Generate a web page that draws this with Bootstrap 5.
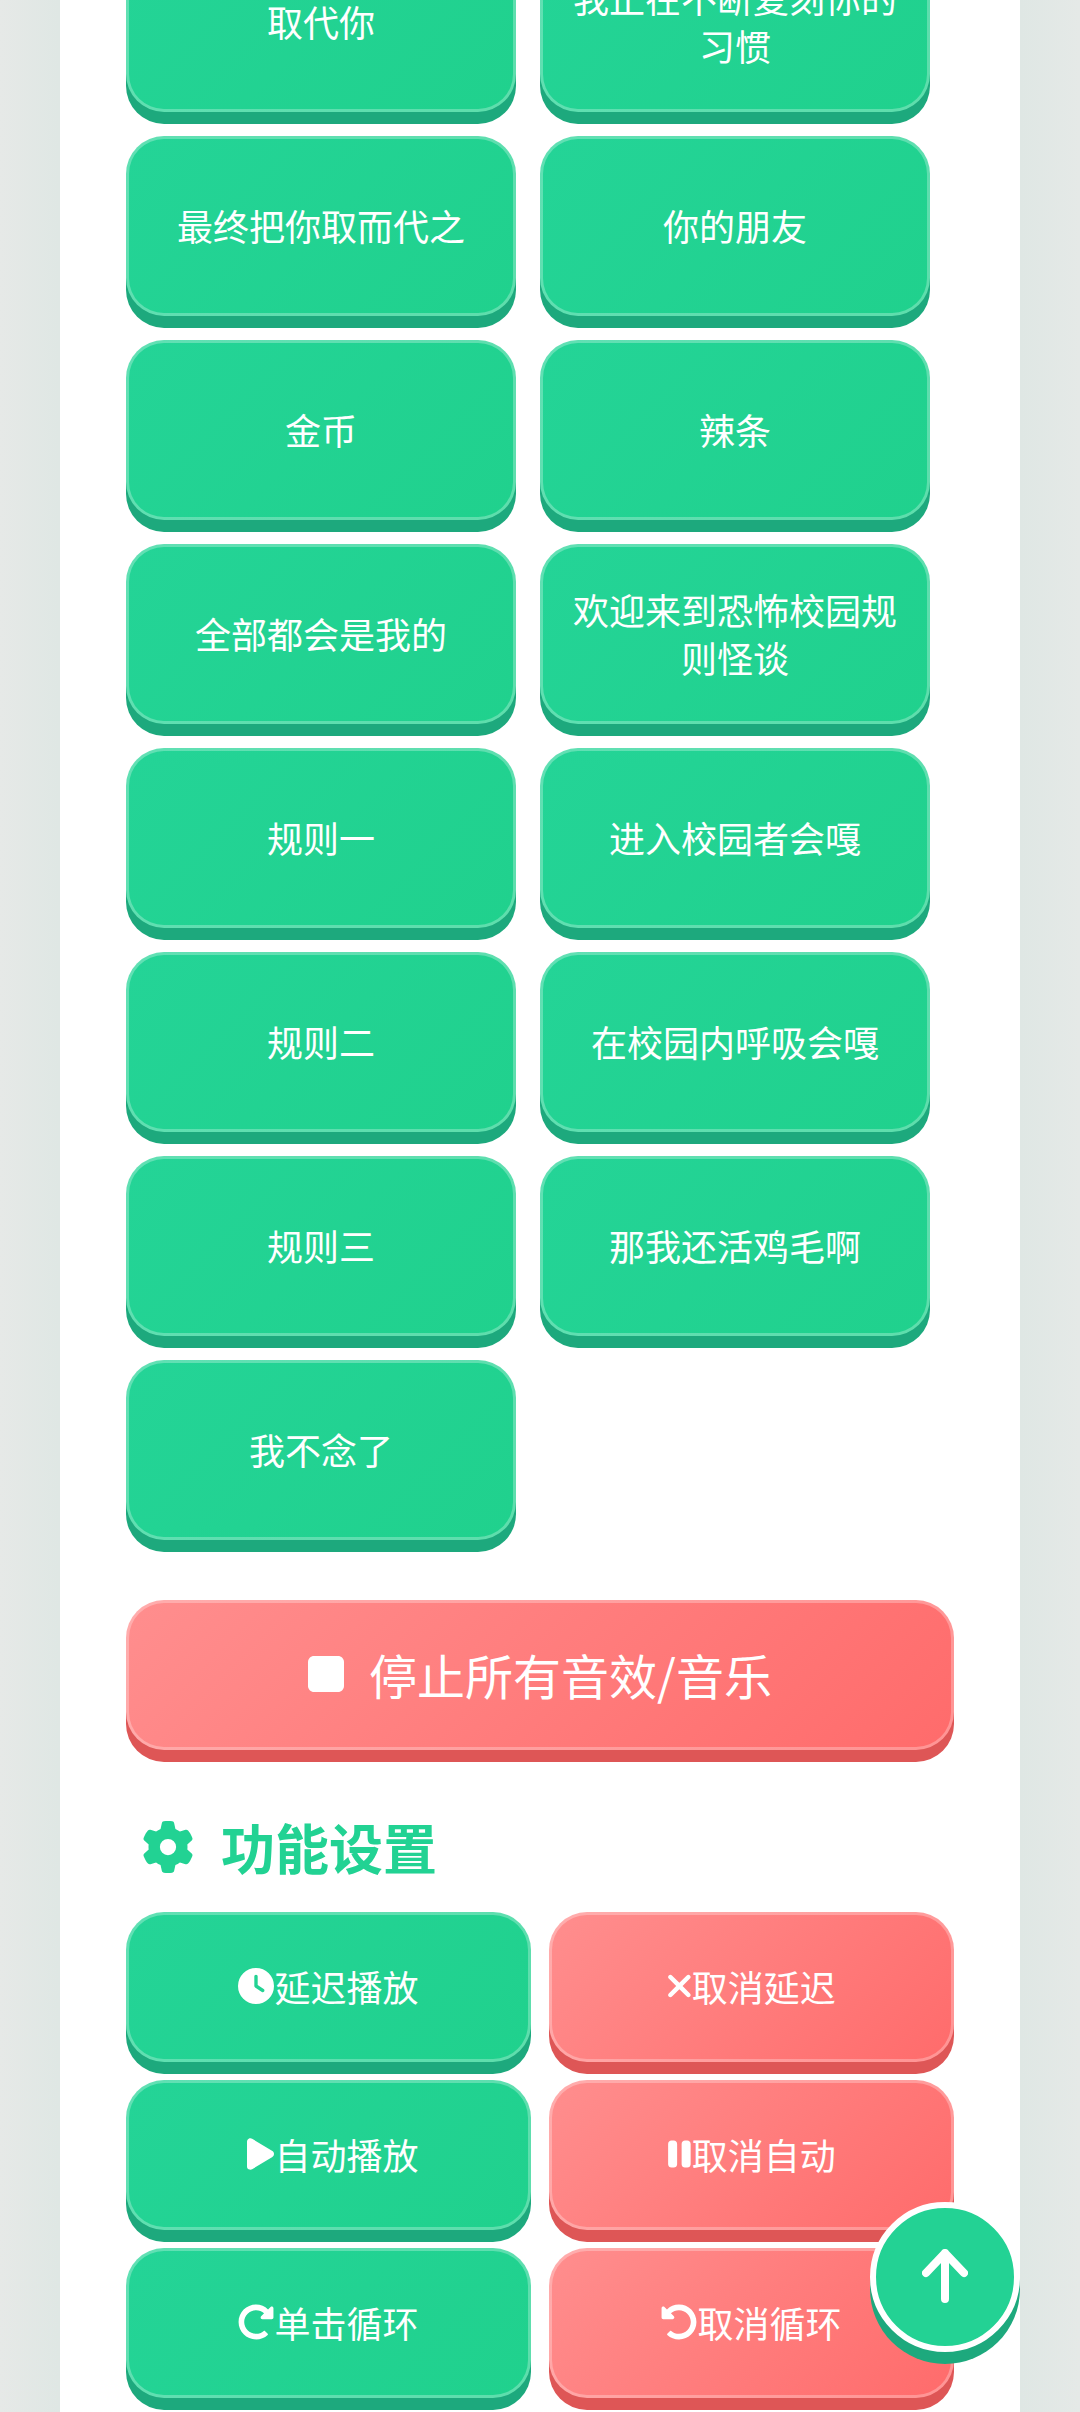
<!DOCTYPE html>
<html lang="zh-CN">
<head>
    <meta charset="UTF-8">
    <meta name="viewport" content="width=device-width, initial-scale=1.0">
    <title>音效按钮</title>
    <link href="https://cdn.jsdelivr.net/npm/bootstrap@5.3.3/dist/css/bootstrap.min.css" rel="stylesheet">
    <style>
        html, body {
            height: 2412px;
            overflow: hidden;
        }
        body {
            background-color: #e0e8e5;
            background-image: linear-gradient(90deg, #e6e9e7, #dfe7e4 5.5%, #dfe7e4 94.5%, #e5e9e7);
            font-family: "Noto Sans CJK SC", "Noto Sans", sans-serif;
        }
        .page-box {
            width: 960px;
            height: 2412px;
            margin: 0 auto;
            padding: 0 66px;
            background-color: #fff;
            overflow: hidden;
        }
        .sound-grid {
            grid-template-columns: 390px 390px;
            gap: 24px;
            margin-top: -68px;
        }
        .tool-grid {
            grid-template-columns: 405px 405px;
            gap: 18px;
        }
        .jelly-btn {
            display: flex;
            align-items: center;
            justify-content: center;
            height: 180px;
            padding: 0 30px 2px;
            color: #fff;
            font-size: 36px;
            line-height: 48px;
            border: 3px solid rgba(255, 255, 255, .28);
            border-radius: 38px;
            background-origin: border-box;
        }
        .jelly-btn:hover, .jelly-btn:active {
            color: #fff;
        }
        .jelly-green {
            background-color: #22d293;
            background-image: linear-gradient(135deg, #24d497, #20d18d);
            box-shadow: 0 12px 0 #1da97d;
        }
        .jelly-red {
            background-color: #ff7c7c;
            background-image: linear-gradient(135deg, #ff8e8e, #ff6b6b);
            box-shadow: 0 12px 0 #de5656;
        }
        .stop-btn {
            height: 150px;
            margin-top: 60px;
            font-size: 48px;
            gap: 25px;
        }
        .tool-btn {
            height: 150px;
        }
        .tool-btn svg {
            width: auto;
            height: 36px;
            fill: #fff;
        }
        .stop-btn svg {
            width: auto;
            height: 48px;
            fill: #fff;
        }
        .tools-title {
            margin: 67px 0 35px 16px;
            color: #22d293;
            font-size: 54px;
            font-weight: 700;
            line-height: 60px;
            gap: 27px;
        }
        .tools-title svg {
            width: 52px;
            height: 52px;
            fill: #22d293;
        }
        .top-btn {
            position: fixed;
            right: 60px;
            bottom: 60px;
            width: 150px;
            height: 150px;
            padding: 0 0 3px;
            border: 6px solid #fff;
            border-radius: 50%;
            background-color: #23d294;
            box-shadow: 0 12px 0 #1da97d;
        }
        .top-btn svg {
            width: 46px;
            height: 54px;
        }
    </style>
</head>
<body>
    <div class="page-box">
        <!-- 音效按钮 -->
        <div class="d-grid sound-grid">
            <button type="button" class="btn jelly-btn jelly-green">取代你</button>
            <button type="button" class="btn jelly-btn jelly-green">我正在不断复刻你的习惯</button>
            <button type="button" class="btn jelly-btn jelly-green">最终把你取而代之</button>
            <button type="button" class="btn jelly-btn jelly-green">你的朋友</button>
            <button type="button" class="btn jelly-btn jelly-green">金币</button>
            <button type="button" class="btn jelly-btn jelly-green">辣条</button>
            <button type="button" class="btn jelly-btn jelly-green">全部都会是我的</button>
            <button type="button" class="btn jelly-btn jelly-green">欢迎来到恐怖校园规则怪谈</button>
            <button type="button" class="btn jelly-btn jelly-green">规则一</button>
            <button type="button" class="btn jelly-btn jelly-green">进入校园者会嘎</button>
            <button type="button" class="btn jelly-btn jelly-green">规则二</button>
            <button type="button" class="btn jelly-btn jelly-green">在校园内呼吸会嘎</button>
            <button type="button" class="btn jelly-btn jelly-green">规则三</button>
            <button type="button" class="btn jelly-btn jelly-green">那我还活鸡毛啊</button>
            <button type="button" class="btn jelly-btn jelly-green">我不念了</button>
        </div>

        <button type="button" class="btn jelly-btn jelly-red stop-btn w-100">
            <svg viewBox="0 0 384 512"><path d="M0 128C0 92.7 28.7 64 64 64H320c35.3 0 64 28.7 64 64V384c0 35.3-28.7 64-64 64H64c-35.3 0-64-28.7-64-64V128z"/></svg>
            <span>停止所有音效/音乐</span>
        </button>

        <!-- 功能设置 -->
        <div class="d-flex align-items-center tools-title">
            <svg viewBox="0 0 512 512"><path d="M495.9 166.6c3.2 8.7 .5 18.4-6.4 24.6l-43.3 39.4c1.1 8.3 1.7 16.8 1.7 25.4s-.6 17.1-1.7 25.4l43.3 39.4c6.9 6.2 9.6 15.9 6.4 24.6c-4.4 11.9-9.7 23.3-15.8 34.3l-4.7 8.1c-6.6 11-14 21.4-22.1 31.2c-5.9 7.2-15.7 9.6-24.5 6.8l-55.7-17.7c-13.4 10.3-28.2 18.9-44 25.4l-12.5 57.1c-2 9.1-9 16.3-18.2 17.8c-13.8 2.3-28 3.5-42.5 3.5s-28.7-1.2-42.5-3.5c-9.2-1.5-16.2-8.7-18.2-17.8l-12.5-57.1c-15.8-6.5-30.6-15.1-44-25.4L83.1 425.9c-8.8 2.8-18.6 .3-24.5-6.8c-8.1-9.8-15.5-20.2-22.1-31.2l-4.7-8.1c-6.1-11-11.4-22.4-15.8-34.3c-3.2-8.7-.5-18.4 6.4-24.6l43.3-39.4C64.6 273.1 64 264.6 64 256s.6-17.1 1.7-25.4L22.4 191.2c-6.9-6.2-9.6-15.9-6.4-24.6c4.4-11.9 9.7-23.3 15.8-34.3l4.7-8.1c6.6-11 14-21.4 22.1-31.2c5.9-7.2 15.7-9.6 24.5-6.8l55.7 17.7c13.4-10.3 28.2-18.9 44-25.4l12.5-57.1c2-9.1 9-16.3 18.2-17.8C227.3 1.2 241.5 0 256 0s28.7 1.2 42.5 3.5c9.2 1.5 16.2 8.7 18.2 17.8l12.5 57.1c15.8 6.5 30.6 15.1 44 25.4l55.7-17.7c8.8-2.8 18.6-.3 24.5 6.8c8.1 9.8 15.5 20.2 22.1 31.2l4.7 8.1c6.1 11 11.4 22.4 15.8 34.3zM256 336a80 80 0 1 0 0-160 80 80 0 1 0 0 160z"/></svg>
            <span>功能设置</span>
        </div>

        <div class="d-grid tool-grid">
            <button type="button" class="btn jelly-btn jelly-green tool-btn">
                <svg viewBox="0 0 512 512"><path d="M256 0a256 256 0 1 1 0 512A256 256 0 1 1 256 0zM232 120V256c0 8 4 15.5 10.7 20l96 64c11 7.4 25.9 4.4 33.3-6.7s4.4-25.9-6.7-33.3L280 243.2V120c0-13.3-10.7-24-24-24s-24 10.7-24 24z"/></svg>
                <span>延迟播放</span>
            </button>
            <button type="button" class="btn jelly-btn jelly-red tool-btn">
                <svg viewBox="16 0 352 512"><path d="M342.6 150.6c12.5-12.5 12.5-32.8 0-45.3s-32.8-12.5-45.3 0L192 210.7 86.6 105.4c-12.5-12.5-32.8-12.5-45.3 0s-12.5 32.8 0 45.3L146.7 256 41.4 361.4c-12.5 12.5-12.5 32.8 0 45.3s32.8 12.5 45.3 0L192 301.3 297.4 406.6c12.5 12.5 32.8 12.5 45.3 0s12.5-32.8 0-45.3L237.3 256 342.6 150.6z"/></svg>
                <span>取消延迟</span>
            </button>
            <button type="button" class="btn jelly-btn jelly-green tool-btn">
                <svg viewBox="-128 0 512 512"><path d="M73 39c-14.8-9.1-33.4-9.4-48.5-.9S0 62.6 0 80V432c0 17.4 9.4 33.4 24.5 41.9s33.7 8.1 48.5-.9L361 297c14.3-8.7 23-24.2 23-41s-8.7-32.2-23-41L73 39z"/></svg>
                <span>自动播放</span>
            </button>
            <button type="button" class="btn jelly-btn jelly-red tool-btn">
                <svg viewBox="-16 0 352 512"><path d="M48 64C21.5 64 0 85.5 0 112V400c0 26.5 21.5 48 48 48H80c26.5 0 48-21.5 48-48V112c0-26.5-21.5-48-48-48H48zm192 0c-26.5 0-48 21.5-48 48V400c0 26.5 21.5 48 48 48h32c26.5 0 48-21.5 48-48V112c0-26.5-21.5-48-48-48H240z"/></svg>
                <span>取消自动</span>
            </button>
            <button type="button" class="btn jelly-btn jelly-green tool-btn">
                <svg viewBox="0 0 512 512"><path d="M256.455 8c66.269.119 126.437 26.233 170.859 68.685l35.715-35.715C478.149 25.851 504 36.559 504 57.941V192c0 13.255-10.745 24-24 24H345.941c-21.382 0-32.09-25.851-16.971-40.971l41.75-41.75c-30.864-28.899-70.801-44.907-113.23-45.273-92.398-.798-170.283 73.977-169.484 169.442C88.764 348.009 162.184 424 256 424c41.127 0 79.997-14.678 110.629-41.556 4.743-4.161 11.906-3.908 16.368.553l39.662 39.662c4.872 4.872 4.631 12.815-.482 17.433C378.202 479.813 319.926 504 256 504 119.034 504 8.001 392.967 8 256.002 7.999 119.193 119.646 7.755 256.455 8z"/></svg>
                <span>单击循环</span>
            </button>
            <button type="button" class="btn jelly-btn jelly-red tool-btn">
                <svg viewBox="0 0 512 512"><path d="M255.545 8c-66.269.119-126.437 26.233-170.859 68.685L48.971 40.971C33.851 25.851 8 36.559 8 57.941V192c0 13.255 10.745 24 24 24h134.059c21.382 0 32.09-25.851 16.971-40.971l-41.75-41.75c30.864-28.899 70.801-44.907 113.23-45.273 92.398-.798 170.283 73.977 169.484 169.442C423.236 348.009 349.816 424 256 424c-41.127 0-79.997-14.678-110.629-41.556-4.743-4.161-11.906-3.908-16.368.553L89.341 422.659c-4.872 4.872-4.631 12.815.482 17.433C133.798 479.813 192.074 504 256 504c136.966 0 247.999-111.033 248-247.998C504.001 119.193 392.354 7.755 255.545 8z"/></svg>
                <span>取消循环</span>
            </button>
        </div>
    </div>

    <!-- 回到顶部 -->
    <button type="button" class="btn top-btn d-flex align-items-center justify-content-center">
        <svg viewBox="0 0 46 54" fill="none" stroke="#fff" stroke-width="8" stroke-linecap="round" stroke-linejoin="round"><path d="M23 50V4M4 24 23 4l19 20"/></svg>
    </button>
</body>
</html>
